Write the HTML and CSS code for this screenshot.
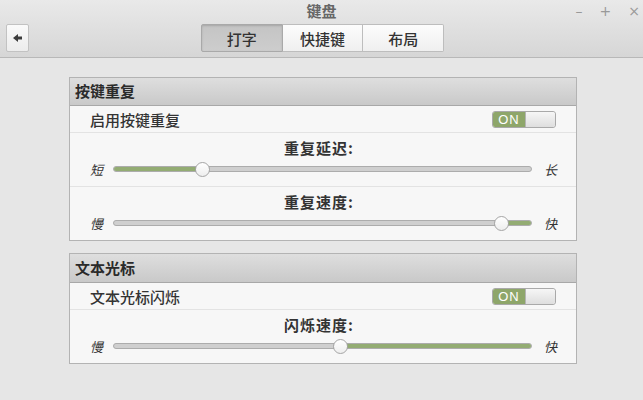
FILE: index.html
```html
<!DOCTYPE html>
<html>
<head>
    <title>键盘</title>
    <link rel="stylesheet" href="styles.css">
</head>
<body>
    <div class="titlebar">
        <div class="title-row">
            <span></span>
            <span class="title">键盘</span>
            <div class="win-controls">
                <span>&ndash;</span>
                <span>+</span>
                <span>&times;</span>
            </div>
        </div>
        <div class="toolbar">
            <button class="back-btn">
                <svg width="10" height="8" viewBox="0 0 10 8"><path d="M0 4 L5 0 L5 2.5 L9 2.5 L9 5.5 L5 5.5 L5 8 Z" fill="#3c3c3c"/></svg>
            </button>
            <div class="switcher">
                <button class="active">打字</button>
                <button>快捷键</button>
                <button>布局</button>
            </div>
        </div>
    </div>

    <div class="content">
        <div class="frame">
            <div class="frame-head">按键重复</div>
            <div class="row">
                <span>启用按键重复</span>
                <div class="switch"><span class="on">ON</span><span class="off"></span></div>
            </div>
            <div class="block">
                <div class="block-label">重复延迟:</div>
                <div class="slider-row">
                    <span class="end">短</span>
                    <div class="track"><div class="fill" style="width: 21%"></div><div class="knob" style="left: 21%"></div></div>
                    <span class="end">长</span>
                </div>
            </div>
            <div class="block">
                <div class="block-label">重复速度:</div>
                <div class="slider-row">
                    <span class="end">慢</span>
                    <div class="track"><div class="fill fill-right" style="width: 7.1%"></div><div class="knob" style="left: 92.9%"></div></div>
                    <span class="end">快</span>
                </div>
            </div>
        </div>

        <div class="frame">
            <div class="frame-head">文本光标</div>
            <div class="row">
                <span>文本光标闪烁</span>
                <div class="switch"><span class="on">ON</span><span class="off"></span></div>
            </div>
            <div class="block">
                <div class="block-label">闪烁速度:</div>
                <div class="slider-row">
                    <span class="end">慢</span>
                    <div class="track"><div class="fill fill-right" style="width: 45.7%"></div><div class="knob" style="left: 54.3%"></div></div>
                    <span class="end">快</span>
                </div>
            </div>
        </div>
    </div>
</body>
</html>
```

FILE: styles.css
```css
body {
    margin: 0;
    background-color: #e6e6e6;
    font-family: "Noto Sans CJK SC", "Noto Sans", sans-serif;
    color: #333;
    width: 643px;
    height: 400px;
    overflow: hidden;
}
.titlebar {
    height: 57px;
    background: linear-gradient(#e9e9e9, #d6d6d6);
    border-bottom: 1px solid #b8b8b8;
}
.title-row {
    display: grid;
    grid-template-columns: 1fr auto 1fr;
    height: 22px;
    align-items: center;
}
.title {
    font-size: 15px;
    font-weight: bold;
    color: #666;
    line-height: 20px;
}
.win-controls {
    justify-self: end;
    display: flex;
    gap: 17px;
    padding-right: 3px;
    font-size: 14px;
    color: #999;
    font-family: "DejaVu Sans", sans-serif;
}
.toolbar {
    position: relative;
    height: 28px;
    margin-top: 2px;
}
.back-btn {
    position: absolute;
    left: 6px;
    top: 0;
    width: 23px;
    height: 28px;
    padding: 0;
    border: 1px solid #c2c2c2;
    border-radius: 2px;
    background: linear-gradient(#fafafa, #ececec);
    display: flex;
    align-items: center;
    justify-content: center;
}
.switcher {
    display: flex;
    width: 243px;
    margin: 0 auto;
    position: relative;
    left: 1px;
}
.switcher button {
    flex: 1;
    height: 28px;
    border: 1px solid #bdbdbd;
    border-left: none;
    background: linear-gradient(#fcfcfc, #efefef);
    font-family: "Noto Sans CJK SC", sans-serif;
    font-size: 15px;
    font-weight: 500;
    color: #333;
    padding: 0;
}
.switcher button:first-child {
    border-left: 1px solid #bdbdbd;
    border-radius: 2px 0 0 2px;
}
.switcher button:last-child {
    border-radius: 0 2px 2px 0;
}
.switcher button.active {
    background: linear-gradient(#c4c4c4, #cdcdcd);
    border-color: #a9a9a9;
    box-shadow: inset 0 1px 2px rgba(0,0,0,0.15);
}
.content {
    padding: 19px 0 0 69px;
}
.frame {
    width: 506px;
    border: 1px solid #b3b3b3;
    background-color: #f7f7f7;
    margin-bottom: 12px;
}
.frame-head {
    height: 27px;
    line-height: 26px;
    padding-left: 5px;
    font-size: 15px;
    font-weight: bold;
    color: #2a2a2a;
    background: linear-gradient(#dedede, #c9c9c9);
    border-bottom: 1px solid #a8a8a8;
}
.frame + .frame .frame-head {
    height: 28px;
    line-height: 28px;
}
.row {
    display: flex;
    align-items: center;
    justify-content: space-between;
    height: 26px;
    padding: 0 20px 0 20px;
    font-size: 15px;
    font-weight: 500;
    color: #333;
    border-bottom: 1px solid #e3e3e3;
}
.switch {
    display: flex;
    width: 64px;
    height: 17px;
    border-radius: 3px;
    overflow: hidden;
    border: 1px solid #a9a9a9;
    box-sizing: border-box;
}
.switch .on {
    width: 32px;
    background-color: #8ea66a;
    color: #fff;
    font-family: "Liberation Sans", sans-serif;
    font-size: 13px;
    line-height: 15px;
    text-align: center;
    letter-spacing: 1px;
}
.switch .off {
    flex: 1;
    background: linear-gradient(#f6f6f6, #dedede);
    border-left: 1px solid #b4b4b4;
    border-radius: 0 2px 2px 0;
}
.block {
    height: 53px;
    border-bottom: 1px solid #e3e3e3;
}
.block:last-child {
    border-bottom: none;
}
.block-label {
    text-align: center;
    font-size: 15px;
    font-weight: bold;
    letter-spacing: 1px;
    line-height: 20px;
    padding-top: 5px;
    padding-right: 8px;
    color: #333;
}
.slider-row {
    display: flex;
    align-items: center;
    height: 22px;
    padding: 0 20px 0 20px;
}
.end {
    font-size: 13px;
    font-style: italic;
    color: #333;
    width: 12px;
}
.track {
    position: relative;
    flex: 1;
    height: 4px;
    margin: 0 12px 0 11px;
    background-color: #cfcfcf;
    border: 1px solid #acacac;
    border-radius: 3px;
}
.fill {
    height: 100%;
    background-color: #93ac73;
    border-radius: 3px;
}
.fill-right {
    margin-left: auto;
}
.knob {
    position: absolute;
    top: 50%;
    width: 13px;
    height: 13px;
    margin: -7px 0 0 -7px;
    border-radius: 50%;
    background: linear-gradient(#ffffff, #eeeeee);
    border: 1px solid #a5a5a5;
}
```
